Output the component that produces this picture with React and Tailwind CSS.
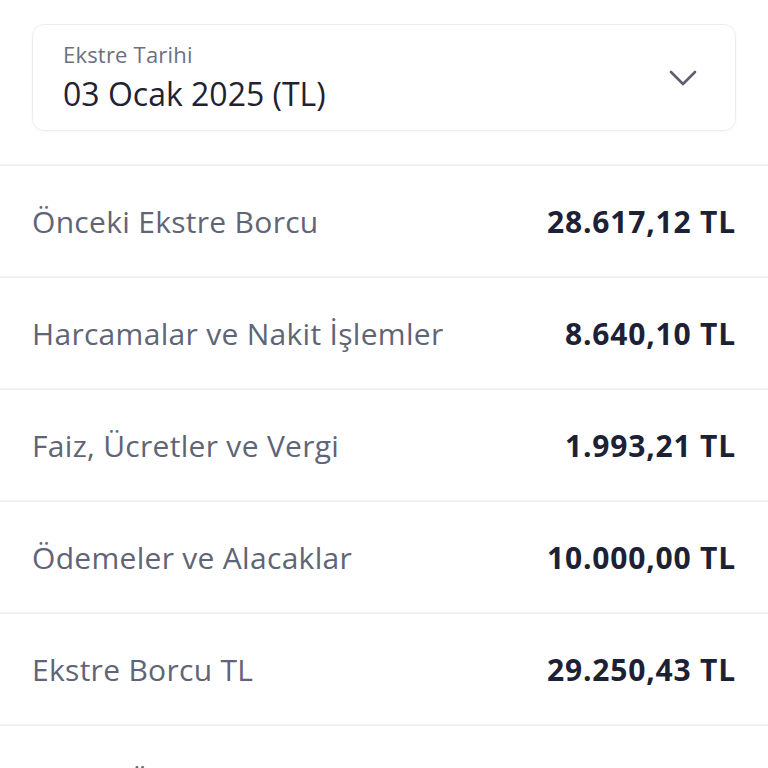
import React from 'react';

const rows = [
  { label: 'Önceki Ekstre Borcu', value: '28.617,12 TL' },
  { label: 'Harcamalar ve Nakit İşlemler', value: '8.640,10 TL' },
  { label: 'Faiz, Ücretler ve Vergi', value: '1.993,21 TL' },
  { label: 'Ödemeler ve Alacaklar', value: '10.000,00 TL' },
  { label: 'Ekstre Borcu TL', value: '29.250,43 TL' },
  { label: 'Asgari Ödeme Tutarı', value: '5.851,09 TL' },
];

const ChevronDown = () => (
  <svg width="28" height="16" viewBox="0 0 28 16" fill="none" stroke="#5b606e" strokeWidth="2.6" strokeLinecap="round" strokeLinejoin="round">
    <path d="M2 2l12 12L26 2" />
  </svg>
);

const App = () => {
  return (
    <div className="min-h-screen bg-white overflow-hidden" style={{ fontFamily: '"Open Sans", Lato, sans-serif' }}>
      <div className="px-8 pt-6 pb-[33px]">
        <div className="flex items-center justify-between h-[107px] rounded-xl border border-[#ededf0] shadow-[0_1px_3px_rgba(0,0,0,0.04)] pl-[30px] pr-[38px]">
          <div className="flex flex-col">
            <span className="text-[22px] leading-[26px] tracking-[0.2px] text-[#6c7080]">Ekstre Tarihi</span>
            <span className="text-[32px] leading-10 mt-[7px] text-[#1f2233]">03 Ocak 2025 (TL)</span>
          </div>
          <ChevronDown />
        </div>
      </div>

      <div className="border-t-2 border-[#f1f1f3]">
        {rows.map((row) => (
          <div
            key={row.label}
            className="flex items-center justify-between h-[112px] px-8 border-b-2 border-[#f1f1f3]"
          >
            <span className="text-[30px] tracking-[0.3px] text-[#5f6476]">{row.label}</span>
            <span className="text-[30px] font-bold tracking-[0.8px] text-[#1d2136]">{row.value}</span>
          </div>
        ))}
      </div>
    </div>
  );
};

export default App;
